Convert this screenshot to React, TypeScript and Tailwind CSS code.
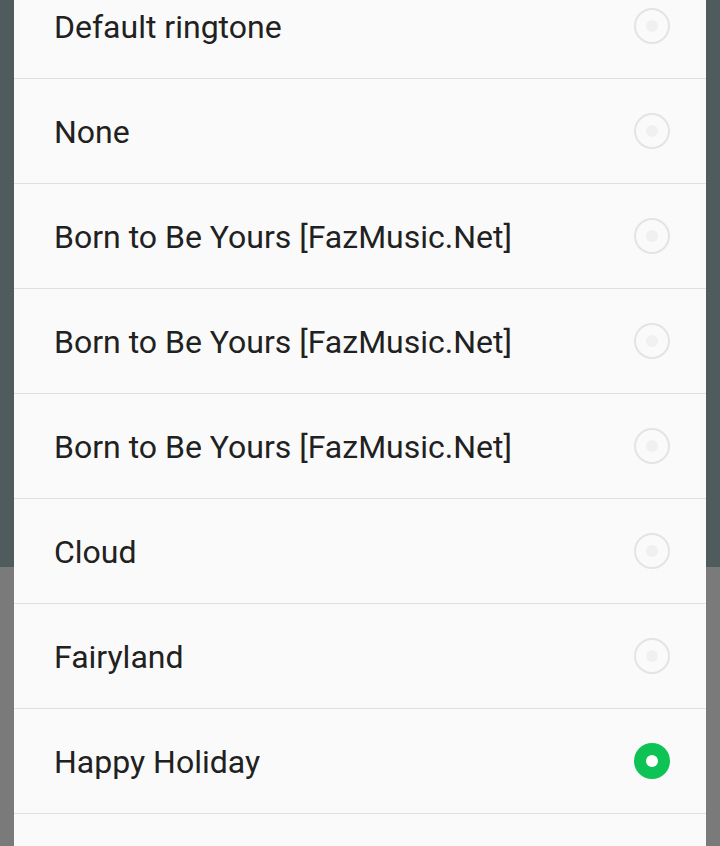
import React from "react";

const items = [
  { label: "Default ringtone", selected: false },
  { label: "None", selected: false },
  { label: "Born to Be Yours [FazMusic.Net]", selected: false },
  { label: "Born to Be Yours [FazMusic.Net]", selected: false },
  { label: "Born to Be Yours [FazMusic.Net]", selected: false },
  { label: "Cloud", selected: false },
  { label: "Fairyland", selected: false },
  { label: "Happy Holiday", selected: true },
  { label: "", selected: false },
];

function Radio({ selected }: { selected: boolean }) {
  if (selected) {
    return (
      <div className="w-[36px] h-[36px] rounded-full bg-[#0dc356] flex items-center justify-center">
        <div className="w-[12px] h-[12px] rounded-full bg-white" />
      </div>
    );
  }
  return (
    <div className="w-[36px] h-[36px] rounded-full border-2 border-[#e4e4e4] flex items-center justify-center">
      <div className="w-[12px] h-[12px] rounded-full bg-[#f0f0f0]" />
    </div>
  );
}

export default function App() {
  return (
    <div
      className="w-[720px] h-[846px] overflow-hidden bg-[linear-gradient(to_bottom,#4f5b5d_0px,#4f5b5d_567px,#7a7a7a_567px,#7a7a7a_100%)]"
      style={{ fontFamily: "Roboto, 'Noto Sans', sans-serif" }}
    >
      <div className="mx-[14px] mt-[-26px] bg-[#fafafa]">
        {items.map((it, i) => (
          <div
            key={i}
            className="h-[105px] border-b border-[#e0e0e0] flex items-center pl-[40px] pr-[36px]"
          >
            <span className="flex-1 text-[32px] text-[#212121] leading-none pt-[2px]">{it.label}</span>
            {it.label && <Radio selected={it.selected} />}
          </div>
        ))}
      </div>
    </div>
  );
}
